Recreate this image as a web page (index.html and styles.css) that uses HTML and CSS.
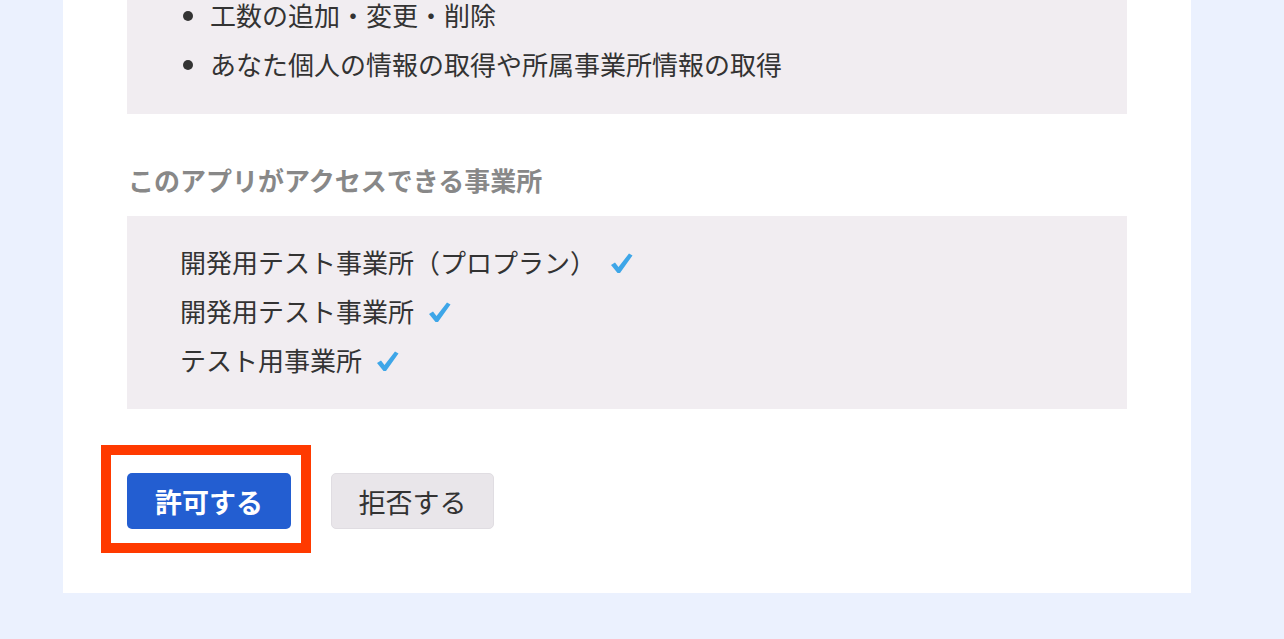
FILE: index.html
```html
<!DOCTYPE html>
<html lang="ja">
<head>
    <meta charset="UTF-8">
    <meta name="viewport" content="width=device-width, initial-scale=1.0">
    <title>アプリ連携の許可</title>
    <link rel="stylesheet" href="styles.css">
</head>
<body>
    <div class="card">
        <!-- Permissions list (scrolled, top is cut off) -->
        <div class="panel panel-scope">
            <ul class="scope-list">
                <li>工数の追加・変更・削除</li>
                <li>あなた個人の情報の取得や所属事業所情報の取得</li>
            </ul>
        </div>

        <h2 class="section-title">このアプリがアクセスできる事業所</h2>
        <div class="panel panel-offices">
            <div class="office">開発用テスト事業所（プロプラン）<svg class="check" width="23" height="22" viewBox="0 0 23 22"><polygon points="1,13 5,10.5 8.5,15 19,1.5 22.5,3.5 10,21 7.5,21"/></svg></div>
            <div class="office">開発用テスト事業所<svg class="check" width="23" height="22" viewBox="0 0 23 22"><polygon points="1,13 5,10.5 8.5,15 19,1.5 22.5,3.5 10,21 7.5,21"/></svg></div>
            <div class="office">テスト用事業所<svg class="check" width="23" height="22" viewBox="0 0 23 22"><polygon points="1,13 5,10.5 8.5,15 19,1.5 22.5,3.5 10,21 7.5,21"/></svg></div>
        </div>

        <div class="actions">
            <div class="highlight-wrap">
                <button class="btn btn-allow">許可する</button>
                <span class="highlight"></span>
            </div>
            <button class="btn btn-deny">拒否する</button>
        </div>
    </div>
</body>
</html>
```

FILE: styles.css
```css
body {
    margin: 0;
    padding: 0 93px 46px 63px;
    background-color: #ebf1fe;
    font-family: "Noto Sans CJK JP", "Noto Sans", sans-serif;
    color: #333;
}

.card {
    background-color: #fff;
    padding: 0 64px 64px 64px;
}

.panel {
    background-color: #f1edf1;
}

/* Top panel */
.panel-scope {
    padding-bottom: 26px;
}

.scope-list {
    margin: 0 0 -10px 0;
    padding: 0 0 0 83px;
    font-size: 26px;
    line-height: 49px;
    position: relative;
    top: -10px;
}

.section-title {
    margin: 48px 0 18px 1px;
    font-size: 26px;
    line-height: 36px;
    font-weight: 700;
    color: #888;
}

/* Offices */
.panel-offices {
    padding: 21px 53px 25px 53px;
}

.office {
    font-size: 26px;
    line-height: 49px;
    height: 49px;
    display: flex;
    align-items: center;
}

.check {
    fill: #3ea6e8;
    margin-left: 14px;
    margin-top: 2px;
}

/* Buttons */
.actions {
    display: flex;
    gap: 40px;
    margin-top: 64px;
}

.highlight-wrap {
    position: relative;
}

.highlight {
    position: absolute;
    top: -28px;
    left: -26px;
    right: -20px;
    bottom: -24px;
    border: 10px solid #ff3a00;
    pointer-events: none;
}

.btn {
    height: 56px;
    font-family: "Noto Sans CJK JP", sans-serif;
    font-size: 27px;
    padding: 0 26px;
    border-radius: 5px;
    cursor: pointer;
}

.btn-allow {
    width: 164px;
    background-color: #235ed1;
    border: none;
    color: #fff;
    font-weight: 700;
}

.btn-deny {
    width: 163px;
    background-color: #e9e6ea;
    border: 1px solid #e0dde2;
    color: #333;
}
```
